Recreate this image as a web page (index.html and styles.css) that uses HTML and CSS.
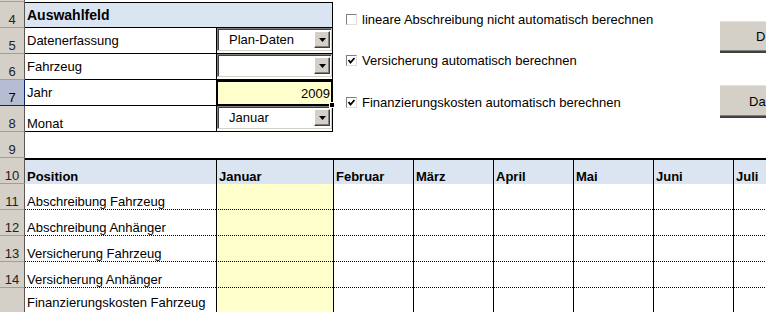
FILE: index.html
```html
<!DOCTYPE html>
<html lang="de">
<head>
    <meta charset="UTF-8">
    <title>Fahrzeugkosten - Auswahlfeld</title>
    <link rel="stylesheet" href="styles.css">
</head>
<body>
    <div class="sheet">
        <div class="row row-edge"><div class="rh"></div></div>

        <div class="row">
            <div class="rh">4</div>
            <div class="cell form-title">Auswahlfeld</div>
        </div>
        <div class="row">
            <div class="rh">5</div>
            <div class="cell form-label">Datenerfassung</div>
            <div class="cell form-value">
                <div class="combo"><span>Plan-Daten</span><i class="combo-btn"><svg width="7" height="4" viewBox="0 0 7 4"><polygon points="0,0 7,0 3.5,4" fill="#000"/></svg></i></div>
            </div>
        </div>
        <div class="row">
            <div class="rh">6</div>
            <div class="cell form-label">Fahrzeug</div>
            <div class="cell form-value">
                <div class="combo"><span></span><i class="combo-btn"><svg width="7" height="4" viewBox="0 0 7 4"><polygon points="0,0 7,0 3.5,4" fill="#000"/></svg></i></div>
            </div>
        </div>
        <div class="row">
            <div class="rh active">7</div>
            <div class="cell form-label">Jahr</div>
            <div class="cell form-value selected">2009<span class="fill-handle"></span></div>
        </div>
        <div class="row">
            <div class="rh">8</div>
            <div class="cell form-label low">Monat</div>
            <div class="cell form-value">
                <div class="combo"><span>Januar</span><i class="combo-btn"><svg width="7" height="4" viewBox="0 0 7 4"><polygon points="0,0 7,0 3.5,4" fill="#000"/></svg></i></div>
            </div>
        </div>
        <div class="row">
            <div class="rh">9</div>
        </div>

        <div class="row row-head">
            <div class="rh">10</div>
            <div class="cell col-a">Position</div>
            <div class="cell col-b">Januar</div>
            <div class="cell col-m">Februar</div>
            <div class="cell col-m">März</div>
            <div class="cell col-m">April</div>
            <div class="cell col-m">Mai</div>
            <div class="cell col-m">Juni</div>
            <div class="cell col-m">Juli</div>
        </div>
        <div class="row row-dot">
            <div class="rh">11</div>
            <div class="cell col-a">Abschreibung Fahrzeug</div>
            <div class="cell col-b"></div>
            <div class="cell col-m"></div><div class="cell col-m"></div><div class="cell col-m"></div>
            <div class="cell col-m"></div><div class="cell col-m"></div><div class="cell col-m"></div>
        </div>
        <div class="row row-dot">
            <div class="rh">12</div>
            <div class="cell col-a">Abschreibung Anhänger</div>
            <div class="cell col-b"></div>
            <div class="cell col-m"></div><div class="cell col-m"></div><div class="cell col-m"></div>
            <div class="cell col-m"></div><div class="cell col-m"></div><div class="cell col-m"></div>
        </div>
        <div class="row row-dot">
            <div class="rh">13</div>
            <div class="cell col-a">Versicherung Fahrzeug</div>
            <div class="cell col-b"></div>
            <div class="cell col-m"></div><div class="cell col-m"></div><div class="cell col-m"></div>
            <div class="cell col-m"></div><div class="cell col-m"></div><div class="cell col-m"></div>
        </div>
        <div class="row row-dot">
            <div class="rh">14</div>
            <div class="cell col-a">Versicherung Anhänger</div>
            <div class="cell col-b"></div>
            <div class="cell col-m"></div><div class="cell col-m"></div><div class="cell col-m"></div>
            <div class="cell col-m"></div><div class="cell col-m"></div><div class="cell col-m"></div>
        </div>
        <div class="row row-body row-last">
            <div class="rh"></div>
            <div class="cell col-a">Finanzierungskosten Fahrzeug</div>
            <div class="cell col-b"></div>
            <div class="cell col-m"></div><div class="cell col-m"></div><div class="cell col-m"></div>
            <div class="cell col-m"></div><div class="cell col-m"></div><div class="cell col-m"></div>
        </div>

        <!-- form controls floating over the sheet -->
        <div class="checks">
            <label class="check"><span class="box"></span>lineare Abschreibung nicht automatisch berechnen</label>
            <label class="check"><span class="box"><svg width="9" height="9" viewBox="0 0 9 9"><polyline points="1.5,4 3.5,6.5 7.5,2" fill="none" stroke="#000" stroke-width="1.8"/></svg></span>Versicherung automatisch berechnen</label>
            <label class="check"><span class="box"><svg width="9" height="9" viewBox="0 0 9 9"><polyline points="1.5,4 3.5,6.5 7.5,2" fill="none" stroke="#000" stroke-width="1.8"/></svg></span>Finanzierungskosten automatisch berechnen</label>
        </div>

        <div class="buttons">
            <button class="btn btn-print">D</button>
            <button class="btn btn-data">Da</button>
        </div>
    </div>
</body>
</html>
```

FILE: styles.css
```css
:root {
    --sys-gray: #d4d0c8;
    --head-blue: #dbe5f1;
    --input-yellow: #ffffcc;
}

body {
    margin: 0;
    background: #fff;
    font-family: 'Liberation Sans', Arial, sans-serif;
    color: #000;
    overflow: hidden;
}

.sheet {
    position: relative;
    width: 766px;
    height: 312px;
    overflow: hidden;
}

.row {
    display: flex;
    height: 26px;
}

.row-edge {
    height: 2px;
}

/* Row headers */
.rh {
    flex: none;
    width: 25px;
    box-sizing: border-box;
    background: var(--sys-gray);
    border-right: 1px solid #5a5853;
    border-bottom: 1px solid #a19e97;
    display: flex;
    justify-content: center;
    align-items: flex-end;
    font-size: 13px;
    line-height: 15px;
    color: #222;
}

.rh.active {
    background: #b6bdd2;
    border-right-color: #0a246a;
    border-bottom-color: #0a246a;
    color: #000;
}

.cell {
    flex: none;
    box-sizing: border-box;
    display: flex;
    align-items: flex-end;
    padding: 0 2px;
    font-size: 13px;
    line-height: 15px;
    white-space: nowrap;
    overflow: hidden;
}

/* Auswahlfeld */
.form-title {
    width: 308px;
    background: var(--head-blue);
    border-top: 1px solid #000;
    border-right: 1px solid #000;
    border-bottom: 1px solid #000;
    align-items: center;
    font-weight: bold;
    font-size: 14px;
}

.form-label {
    width: 191px;
    border-bottom: 1px solid #000;
    align-items: center;
}

.form-label.low {
    align-items: flex-end;
}

.form-value {
    width: 117px;
    border-left: 1px solid #000;
    border-right: 1px solid #000;
    border-bottom: 1px solid #000;
    padding: 0;
    align-items: flex-start;
    overflow: visible;
}

.form-value.selected {
    position: relative;
    background: var(--input-yellow);
    border: 2px solid #000;
    justify-content: flex-end;
    align-items: center;
    padding-right: 1px;
}

.fill-handle {
    position: absolute;
    right: -4px;
    bottom: -4px;
    width: 4px;
    height: 4px;
    background: #000;
    border: 1px solid #fff;
}

.combo {
    width: 115px;
    height: 23px;
    box-sizing: border-box;
    background: #fff;
    border: 1px solid;
    border-color: #808080 #d4d0c8 #d4d0c8 #808080;
    box-shadow: inset 1px 1px 0 #404040;
    display: flex;
    align-items: center;
    justify-content: space-between;
    padding: 0 1px 0 11px;
}

.combo-btn {
    width: 16px;
    height: 17px;
    box-sizing: border-box;
    background: var(--sys-gray);
    border: 1px solid;
    border-color: #fff #404040 #404040 #fff;
    box-shadow: inset -1px -1px 0 #808080;
    display: flex;
    align-items: center;
    justify-content: center;
}

/* Kostentabelle */
.col-a { width: 191px; }
.col-b { width: 117px; border-left: 1px solid #000; }
.col-m { width: 80px; border-left: 1px solid #000; }

.row-head .cell {
    background: var(--head-blue);
    border-top: 2px solid #000;
    font-weight: bold;
}

.row-dot .cell {
    border-bottom: 1px dotted #000;
}

.row-dot .col-b,
.row-body .col-b {
    background: var(--input-yellow);
}

.row-last {
    height: 30px;
}

.row-last .cell {
    align-items: flex-start;
    padding-top: 7px;
}

/* Kontrollkästchen */
.checks {
    position: absolute;
    left: 346px;
    top: 9px;
    display: flex;
    flex-direction: column;
    gap: 21.5px;
}

.check {
    display: flex;
    align-items: center;
    height: 20px;
    font-size: 13px;
    white-space: nowrap;
}

.box {
    width: 11px;
    height: 11px;
    box-sizing: border-box;
    margin-right: 5px;
    background: #fff;
    border: 1px solid;
    border-color: #808080 #e0ddd6 #e0ddd6 #808080;
    display: flex;
    align-items: center;
    justify-content: center;
}

.buttons {
    position: absolute;
    left: 720px;
    top: 21px;
    display: flex;
    flex-direction: column;
    gap: 32px;
}

.btn {
    width: 46px;
    height: 32px;
    background: var(--sys-gray);
    border: none;
    border-top: 1px solid #e6e3dc;
    border-bottom: 2px solid #404040;
    box-shadow: inset 0 -1px 0 #808080;
    font-family: 'Liberation Sans', Arial, sans-serif;
    font-size: 13px;
    text-align: left;
    white-space: nowrap;
    padding: 0;
}

.btn-print { padding-left: 36px; }
.btn-data { height: 33px; padding-left: 29px; }
```
